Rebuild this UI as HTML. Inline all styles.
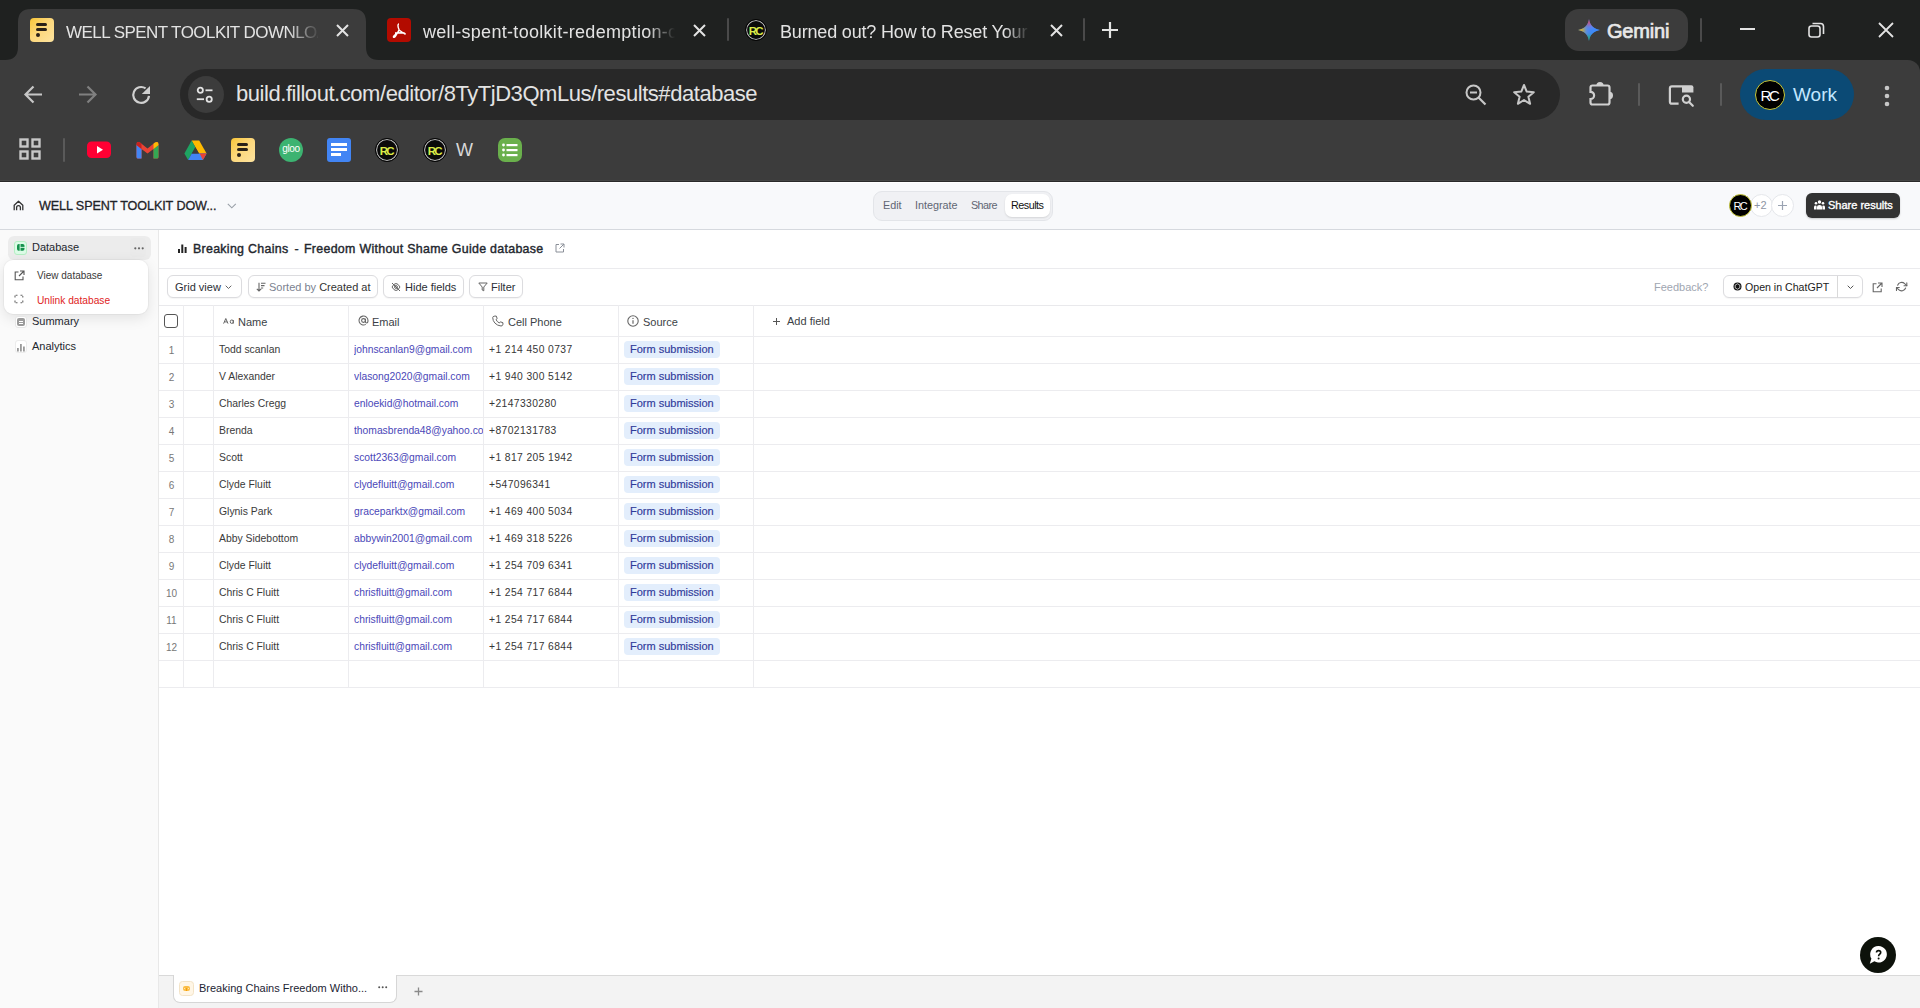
<!DOCTYPE html>
<html><head><meta charset="utf-8">
<style>
*{box-sizing:border-box;margin:0;padding:0}
html,body{width:1920px;height:1008px;overflow:hidden;background:#fff;font-family:"Liberation Sans",sans-serif}
.a{position:absolute}
.t{position:absolute;white-space:nowrap;line-height:1}
svg{position:absolute;overflow:visible}
/* chrome */
#strip{left:0;top:0;width:1920px;height:80px;background:#1f2120}
#toolbar{left:0;top:60px;width:1920px;height:122px;background:#3c3c3c;border-top-right-radius:12px}
.ctext{color:#e3e3e3;font-size:18px}
/* app */
.rc{position:absolute;border-radius:50%;background:#0a0a0a;border:1.2px solid #050505;box-shadow:inset 0 0 0 1.1px #b8b8b8;display:flex;align-items:center;justify-content:center;overflow:hidden}
.rc::after{content:"RC";color:#dcec48;font-size:11.5px;font-weight:700;letter-spacing:-1.8px;margin-left:-1.5px;margin-top:1px}
.rc span{display:none}
#app{left:0;top:182px;width:1920px;height:826px;background:#fff}

.seg{top:200px;font-size:10.8px;color:#5f6673}
.sb{font-size:11px;color:#23272e}
.btn{top:275px;height:23px;border-radius:6px;border:1px solid #dcdcdf;background:#fff;box-shadow:0 1px 1px rgba(0,0,0,.04)}
.tb{top:282px;font-size:11px;color:#2b2f36}
.th{top:317px;font-size:11px;color:#3b3f46}
.hl{left:159px;width:1761px;height:1px;background:#ececef}
.vl{width:1px;background:#ececef}
.rn{left:159px;width:25px;text-align:center;font-size:10px;color:#777}
.nm{left:219px;margin-top:0.2px;font-size:10.4px;color:#3a3a3a}
.em{left:354px;margin-top:0.2px;font-size:10.3px;color:#4a47b8;width:129px;overflow:hidden}
.ph{left:489px;margin-top:0.2px;font-size:10.3px;color:#363636;letter-spacing:0.4px}
.pill{left:624px;width:96px;height:17px;border-radius:4px;background:#e3eefc}
.pt{left:630px;font-size:11px;color:#2f3a9a;-webkit-text-stroke:0.15px #2f3a9a}
</style></head><body>
<!-- ============ BROWSER CHROME ============ -->
<div id="strip" class="a"></div>
<div id="toolbar" class="a"></div>

<!-- active tab shape -->
<svg class="a" style="left:0;top:0" width="400" height="60"><path d="M5 60 Q18 60 18 47 L18 22 Q18 9 31 9 L353 9 Q366 9 366 22 L366 47 Q366 60 379 60 Z" fill="#3c3c3c"/></svg>
<!-- tab1 favicon fillout -->
<div class="a" style="left:30px;top:18px;width:24px;height:24px;border-radius:4px;background:linear-gradient(135deg,#f8c537 0%,#fcd77a 45%,#fde3a0 100%)"></div>
<div class="a" style="left:36px;top:23px;width:11px;height:3px;border-radius:2px;background:#2a2118"></div>
<div class="a" style="left:36px;top:28px;width:11px;height:3px;border-radius:2px;background:#2a2118"></div>
<div class="a" style="left:36px;top:33px;width:4px;height:4px;border-radius:2px;background:#2a2118"></div>
<div class="t ctext" style="left:66px;top:23.5px;font-size:17px;letter-spacing:-0.55px;width:252px;overflow:hidden;-webkit-mask-image:linear-gradient(90deg,#000 222px,transparent 254px)">WELL SPENT TOOLKIT DOWNLOAD</div>
<svg style="left:336px;top:24px" width="13" height="13"><path d="M1 1L12 12M12 1L1 12" stroke="#e3e3e3" stroke-width="2"/></svg>
<!-- tab2 pdf -->
<div class="a" style="left:387px;top:18px;width:24px;height:24px;border-radius:4px;background:#b30b00"></div>
<svg style="left:387px;top:18px" width="24" height="24"><path d="M12 6 C10.5 6 10.8 9 12 11.5 C13 14 7 17 6.5 18.5 C6 20 8 19.5 9 17.5 L12 12 L17 15.5 C19 17 18.5 15 16 14.8 L8 15" fill="none" stroke="#fff" stroke-width="1.4"/></svg>
<div class="t ctext" style="left:423px;top:23px;font-size:18px;letter-spacing:0.3px;width:255px;overflow:hidden;-webkit-mask-image:linear-gradient(90deg,#000 225px,transparent 252px)">well-spent-toolkit-redemption-code</div>
<svg style="left:693px;top:24px" width="13" height="13"><path d="M1 1L12 12M12 1L1 12" stroke="#e3e3e3" stroke-width="2"/></svg>
<div class="a" style="left:727px;top:18px;width:2px;height:23px;background:#4a4a4a;border-radius:1px"></div>
<!-- tab3 RC -->
<div class="a rc" style="left:745px;top:19px;width:22px;height:22px"></div>
<div class="t ctext" style="left:780px;top:23px;font-size:18px;letter-spacing:-0.17px;width:250px;overflow:hidden;-webkit-mask-image:linear-gradient(90deg,#000 225px,transparent 250px)">Burned out? How to Reset Your Life</div>
<svg style="left:1050px;top:24px" width="13" height="13"><path d="M1 1L12 12M12 1L1 12" stroke="#e3e3e3" stroke-width="2"/></svg>
<div class="a" style="left:1083px;top:18px;width:2px;height:23px;background:#4a4a4a;border-radius:1px"></div>
<svg style="left:1102px;top:22px" width="16" height="16"><path d="M8 0V16M0 8H16" stroke="#e3e3e3" stroke-width="2.2"/></svg>
<!-- gemini -->
<div class="a" style="left:1565px;top:9px;width:123px;height:42px;border-radius:14px;background:#3c3c3c"></div>
<svg style="left:1577px;top:18px" width="24" height="24"><defs><clipPath id="gstar"><path d="M12 1 C12.8 7 17 11.2 23 12 C17 12.8 12.8 17 12 23 C11.2 17 7 12.8 1 12 C7 11.2 11.2 7 12 1Z"/></clipPath><filter id="gblur"><feGaussianBlur stdDeviation="2.5"/></filter></defs><g clip-path="url(#gstar)"><rect width="24" height="24" fill="#4285f4"/><g filter="url(#gblur)"><circle cx="12" cy="3" r="4" fill="#f2434f"/><circle cx="3" cy="12" r="4.5" fill="#fbbc04"/><circle cx="12" cy="21.5" r="4" fill="#16b05a"/><circle cx="19" cy="12" r="5" fill="#3d8bfd"/></g></g></svg>
<div class="t" style="left:1607px;top:21px;font-size:20px;font-weight:400;color:#e8e8e8;letter-spacing:-0.2px;-webkit-text-stroke:0.7px #e8e8e8">Gemini</div>
<div class="a" style="left:1700px;top:18px;width:2px;height:24px;background:#4a4a4a;border-radius:1px"></div>
<!-- window controls -->
<div class="a" style="left:1740px;top:28px;width:15px;height:2px;background:#e3e3e3"></div>
<svg style="left:1808px;top:22px" width="17" height="16"><rect x="1" y="4" width="11" height="11" rx="2.5" fill="none" stroke="#e3e3e3" stroke-width="1.6"/><path d="M4.5 1.5H12.5Q15.5 1.5 15.5 4.5V12" fill="none" stroke="#e3e3e3" stroke-width="1.6"/></svg>
<svg style="left:1878px;top:22px" width="16" height="16"><path d="M1 1L15 15M15 1L1 15" stroke="#e3e3e3" stroke-width="1.8"/></svg>

<!-- toolbar -->
<svg style="left:24px;top:85px" width="19" height="19"><path d="M18 9.5H2M9.5 1.5L1.5 9.5L9.5 17.5" fill="none" stroke="#c7c7c7" stroke-width="2.2"/></svg>
<svg style="left:78px;top:85px" width="19" height="19"><path d="M1 9.5H17M9.5 1.5L17.5 9.5L9.5 17.5" fill="none" stroke="#808080" stroke-width="2.2"/></svg>
<svg style="left:131px;top:84px" width="21" height="21"><path d="M18 11.8 A7.9 7.9 0 1 1 14.6 4.4" fill="none" stroke="#d0d0d0" stroke-width="2.2"/><path d="M19 1.9V10.1H10.8Z" fill="#d0d0d0"/></svg>
<div class="a" style="left:180px;top:69px;width:1380px;height:51px;border-radius:26px;background:#282828"></div>
<div class="a" style="left:188px;top:76px;width:36px;height:37px;border-radius:50%;background:#3c3c3c"></div>
<svg style="left:195px;top:85px" width="22" height="20"><circle cx="5.3" cy="5.3" r="2.6" fill="none" stroke="#e3e3e3" stroke-width="1.8"/><path d="M10.5 5.3H17.5" stroke="#e3e3e3" stroke-width="1.8"/><circle cx="14.2" cy="14.2" r="2.6" fill="none" stroke="#e3e3e3" stroke-width="1.8"/><path d="M1.8 14.2H9" stroke="#e3e3e3" stroke-width="1.8"/></svg>
<div class="t" style="left:236px;top:82.5px;font-size:22px;letter-spacing:-0.45px;color:#e3e3e3">build.fillout.com/editor/8TyTjD3QmLus/results#database</div>
<svg style="left:1465px;top:84px" width="23" height="23"><circle cx="8.5" cy="8.5" r="7" fill="none" stroke="#c7c7c7" stroke-width="2"/><path d="M5 8.5H12" stroke="#c7c7c7" stroke-width="2"/><path d="M13.5 13.5L20.5 20.5" stroke="#c7c7c7" stroke-width="2.2"/></svg>
<svg style="left:1512px;top:83px" width="24" height="23"><path d="M12 2L14.7 8.6L21.8 9.2L16.4 13.8L18.1 20.8L12 17L5.9 20.8L7.6 13.8L2.2 9.2L9.3 8.6Z" fill="none" stroke="#c7c7c7" stroke-width="2" stroke-linejoin="round"/></svg>
<svg style="left:1588px;top:81px" width="27" height="26"><path d="M4.5 4.5H19.5Q21.5 4.5 21.5 6.5V21.5Q21.5 23.5 19.5 23.5H4.5Q2.5 23.5 2.5 21.5V18A3.6 3.6 0 0 0 2.5 10.8V6.5Q2.5 4.5 4.5 4.5Z" fill="none" stroke="#d0d0d0" stroke-width="2.2"/><path d="M8.4 4.6A3.6 3.6 0 0 1 15.6 4.6Z" fill="#d0d0d0"/><path d="M21.4 10.8A3.6 3.6 0 0 1 21.4 18Z" fill="#d0d0d0"/></svg>
<div class="a" style="left:1638px;top:83px;width:2px;height:23px;background:#5a5a5a;border-radius:1px"></div>
<svg style="left:1668px;top:83px" width="28" height="25"><path d="M10.6 20.7H3.9Q1.9 20.7 1.9 18.7V5.3Q1.9 3.3 3.9 3.3H14" fill="none" stroke="#d0d0d0" stroke-width="2.2"/><path d="M14 2.2H23.4Q25.4 2.2 25.4 4.2V9.6H14Z" fill="#d0d0d0"/><circle cx="18.4" cy="16.3" r="3.6" fill="none" stroke="#d0d0d0" stroke-width="2.2"/><path d="M21 19L24.8 22.8" stroke="#d0d0d0" stroke-width="2.2" stroke-linecap="round"/></svg>
<div class="a" style="left:1720px;top:83px;width:2px;height:23px;background:#5a5a5a;border-radius:1px"></div>
<div class="a" style="left:1740px;top:69px;width:114px;height:51px;border-radius:26px;background:#0b4a75"></div>
<div class="a" style="left:1755px;top:80px;width:30px;height:30px;border-radius:50%;background:#000;border:1.5px solid #c9c93a;display:flex;align-items:center;justify-content:center"><span style="color:#fff;font-size:15px;font-weight:400;letter-spacing:-2.4px;margin-left:-2px">RC</span></div>
<div class="t" style="left:1793px;top:85px;font-size:19px;color:#c2e7ff">Work</div>
<svg style="left:1883px;top:85px" width="8" height="22"><circle cx="4" cy="3" r="2.3" fill="#c7c7c7"/><circle cx="4" cy="11" r="2.3" fill="#c7c7c7"/><circle cx="4" cy="19" r="2.3" fill="#c7c7c7"/></svg>

<!-- bookmarks -->
<svg style="left:19px;top:138px" width="23" height="23"><g fill="none" stroke="#c7c7c7" stroke-width="2.4"><rect x="1.5" y="1.5" width="7" height="7"/><rect x="13.5" y="1.5" width="7" height="7"/><rect x="1.5" y="13.5" width="7" height="7"/><rect x="13.5" y="13.5" width="7" height="7"/></g></svg>
<div class="a" style="left:63px;top:138px;width:2px;height:24px;background:#5a5a5a;border-radius:1px"></div>
<svg style="left:87px;top:141px" width="25" height="18"><rect x="0" y="0.5" width="24" height="16.5" rx="4.5" fill="#ff0033"/><path d="M10 5L16 8.7L10 12.4Z" fill="#fff"/></svg>
<svg style="left:136px;top:141px" width="23" height="18"><path d="M1 17V4L11.5 11.5L22 4V17" fill="none" stroke="#ea4335" stroke-width="0"/><path d="M0.5 3.5 Q0.5 0 4 1.5 L11.5 7.5 L19 1.5 Q22.5 0 22.5 3.5 L22.5 16 Q22.5 17.5 21 17.5 L17.5 17.5 L17.5 8 L11.5 12.5 L5.5 8 L5.5 17.5 L2 17.5 Q0.5 17.5 0.5 16Z" fill="#ea4335"/><path d="M0.5 4 L0.5 16 Q0.5 17.5 2 17.5 L5.5 17.5 L5.5 8 Z" fill="#4285f4"/><path d="M17.5 8 L17.5 17.5 L21 17.5 Q22.5 17.5 22.5 16 L22.5 4Z" fill="#34a853"/><path d="M19 1.5 Q22.5 0 22.5 3.5 L22.5 4 L17.5 8 L17.5 2.7Z" fill="#fbbc04"/><path d="M0.5 3.5 Q0.5 0 4 1.5 L5.5 2.7 L5.5 8 L0.5 4Z" fill="#c5221f"/></svg>
<svg style="left:184px;top:140px" width="23" height="21"><path d="M7.6 0.6H15.2L22.6 13.4H15Z" fill="#ffba00"/><path d="M7.6 0.6L11.4 7.2L4.1 19.9L0.4 13.4Z" fill="#1ea362"/><path d="M7.8 13.4H22.6L18.9 19.9H4.1Z" fill="#4285f4"/><path d="M22.6 13.4L18.9 19.9L15.6 13.4Z" fill="#ea4335"/><path d="M11.4 7.2L15 13.4H7.8Z" fill="#3c3c3c"/></svg>
<div class="a" style="left:231px;top:138px;width:24px;height:24px;border-radius:4px;background:linear-gradient(135deg,#f8c537 0%,#fcd77a 45%,#fde3a0 100%)"></div>
<div class="a" style="left:237px;top:143px;width:11px;height:3px;border-radius:2px;background:#2a2118"></div>
<div class="a" style="left:237px;top:148px;width:11px;height:3px;border-radius:2px;background:#2a2118"></div>
<div class="a" style="left:237px;top:153px;width:4px;height:4px;border-radius:2px;background:#2a2118"></div>
<div class="a" style="left:279px;top:138px;width:24px;height:24px;border-radius:50%;background:#3cb371"></div>
<div class="t" style="left:280px;top:144px;width:22px;text-align:center;font-size:10px;color:#fff;letter-spacing:-0.3px">gloo</div>
<div class="a" style="left:327px;top:138px;width:24px;height:24px;border-radius:3px;background:#4285f4"></div>
<div class="a" style="left:331px;top:143px;width:16px;height:3px;background:#fff"></div>
<div class="a" style="left:331px;top:148px;width:16px;height:3px;background:#fff"></div>
<div class="a" style="left:331px;top:153px;width:10px;height:3px;background:#fff"></div>
<div class="a rc" style="left:375px;top:138px;width:24px;height:24px"></div>
<div class="a rc" style="left:423px;top:138px;width:24px;height:24px"></div>
<div class="t" style="left:456px;top:141px;font-size:18px;color:#d8d8d8">W</div>
<div class="a" style="left:498px;top:138px;width:24px;height:24px;border-radius:7px;background:#6ab04c"></div>
<svg style="left:502px;top:143px" width="16" height="14"><g fill="#fff"><circle cx="1.5" cy="2" r="1.4"/><circle cx="1.5" cy="7" r="1.4"/><circle cx="1.5" cy="12" r="1.4"/><rect x="4.5" y="1" width="11" height="2.2"/><rect x="4.5" y="6" width="11" height="2.2"/><rect x="4.5" y="11" width="11" height="2.2"/></g></svg>
<div class="a" style="left:0;top:180px;width:1920px;height:1px;background:#454545"></div>
<div class="a" style="left:0;top:181px;width:1920px;height:1px;background:#2a2a2a"></div>

<!-- ============ APP ============ -->
<div id="app" class="a"></div>

<!-- header -->
<div class="a" style="left:0;top:182px;width:1920px;height:1px;background:#fff"></div>
<div class="a" style="left:0;top:183px;width:1920px;height:46px;background:#f8f9fb"></div>
<div class="a" style="left:0;top:229px;width:1920px;height:1px;background:#d6d9de"></div>
<svg style="left:13px;top:200px" width="11" height="11"><path d="M1.2 10.2V5.2L5.5 1.3L9.8 5.2V10.2M3.6 10.2V7.6A1.9 1.9 0 0 1 7.4 7.6V10.2" fill="none" stroke="#333" stroke-width="1.3" stroke-linejoin="round"/></svg>
<div class="t" style="left:39px;top:200px;font-size:12.6px;font-weight:400;color:#1f2328;letter-spacing:-0.1px;-webkit-text-stroke:0.3px #1f2328">WELL SPENT TOOLKIT DOW...</div>
<svg style="left:227px;top:203px" width="10" height="6"><path d="M0.8 0.8L4.8 4.8L8.8 0.8" fill="none" stroke="#9aa0a8" stroke-width="1.1"/></svg>
<!-- segmented -->
<div class="a" style="left:873px;top:191px;width:180px;height:30px;border-radius:9px;background:#f0f1f4;border:1px solid #e3e5e9"></div>
<div class="a" style="left:1005px;top:194px;width:45px;height:23px;border-radius:7px;background:#fff;box-shadow:0 1px 2px rgba(0,0,0,.12)"></div>
<div class="t seg" style="left:883px">Edit</div>
<div class="t seg" style="left:915px">Integrate</div>
<div class="t seg" style="left:971px;letter-spacing:-0.6px">Share</div>
<div class="t seg" style="left:1011px;color:#111;letter-spacing:-0.5px">Results</div>
<!-- avatars -->
<div class="a" style="left:1750px;top:194px;width:23px;height:23px;border-radius:50%;background:#fff;border:1px solid #e5e7eb"></div>
<div class="t" style="left:1754px;top:200px;font-size:11px;color:#8d95a3">+2</div>
<div class="a" style="left:1771px;top:194px;width:23px;height:23px;border-radius:50%;background:#fff;border:1px solid #e5e7eb"></div>
<svg style="left:1777px;top:200px" width="11" height="11"><path d="M5.5 1V10M1 5.5H10" stroke="#9aa3b2" stroke-width="1.2"/></svg>
<div class="a" style="left:1729px;top:194px;width:23px;height:23px;border-radius:50%;background:#000;border:1.5px solid #c9c93a;display:flex;align-items:center;justify-content:center"><span style="color:#fff;font-size:11px;font-weight:400;letter-spacing:-1.8px;margin-left:-1.5px">RC</span></div>
<!-- share results -->
<div class="a" style="left:1806px;top:193px;width:94px;height:25px;border-radius:6px;background:#333;box-shadow:0 1px 2px rgba(0,0,0,.2)"></div>
<svg style="left:1814px;top:200px" width="11" height="10"><g fill="#fff"><circle cx="5.5" cy="2" r="1.7"/><circle cx="2" cy="3.2" r="1.3"/><circle cx="9" cy="3.2" r="1.3"/><path d="M3 9.5V6.8Q3 5 5.5 5Q8 5 8 6.8V9.5Z"/><path d="M0 9.5V7Q0 5.6 1.8 5.6Q2.6 5.6 2.6 6.5V9.5Z"/><path d="M11 9.5V7Q11 5.6 9.2 5.6Q8.4 5.6 8.4 6.5V9.5Z"/></g></svg>
<div class="t" style="left:1828px;top:200px;font-size:11px;font-weight:400;color:#fff;-webkit-text-stroke:0.35px #fff">Share results</div>

<!-- sidebar -->
<div class="a" style="left:0;top:230px;width:158px;height:778px;background:#fafafa"></div>
<div class="a" style="left:158px;top:230px;width:1px;height:778px;background:#e8e8e8"></div>
<div class="a" style="left:8px;top:236px;width:143px;height:23.5px;border-radius:6px;background:#ececec"></div>
<div class="a" style="left:130px;top:238px;width:16px;height:19px;border-radius:4px;background:#eaeaea"></div>
<svg style="left:134px;top:247px" width="10" height="3"><g fill="#666"><circle cx="1.3" cy="1.3" r="1.1"/><circle cx="5" cy="1.3" r="1.1"/><circle cx="8.7" cy="1.3" r="1.1"/></g></svg>
<div class="a" style="left:14px;top:241px;width:13px;height:13.5px;border-radius:3px;background:#dcfce7;border:1px solid #b5efc4"></div>
<svg style="left:16.5px;top:244px" width="8" height="7"><rect x="0" y="0" width="7.5" height="6.8" rx="1.8" fill="#15924d"/><path d="M3.1 0V7M3.1 3.4H8" stroke="#dcfce7" stroke-width="0.9"/></svg>
<div class="t sb" style="left:32px;top:242.3px">Database</div>
<!-- popup -->
<div class="a" style="left:4px;top:260px;width:144px;height:54px;border-radius:9px;background:#fff;box-shadow:0 4px 14px rgba(0,0,0,.10),0 0 0 1px rgba(0,0,0,.03)"></div>
<svg style="left:14px;top:270px" width="11" height="11"><path d="M4.5 2H1.2V9.8H9V6.5M6 1H10V5M10 1L5 6" fill="none" stroke="#555" stroke-width="1.1"/></svg>
<div class="t" style="left:37px;top:271px;font-size:10px;color:#3a3a3a">View database</div>
<svg style="left:13px;top:293px" width="12" height="12"><path d="M2 4.5V2.2H4.5M2 7.5V9.8H4.5M7.5 2.2H9.8V4.5M9.8 7.5V9.8H7.5" fill="none" stroke="#666" stroke-width="1.1" stroke-dasharray="2 1"/></svg>
<div class="t" style="left:37px;top:295.5px;font-size:10.2px;color:#e02424">Unlink database</div>
<div class="a" style="left:15px;top:316px;width:12px;height:12px;border-radius:3px;background:#fff;border:1px solid #e6e6e6"></div>
<div class="a" style="left:17px;top:318px;width:8px;height:8px;border-radius:2px;background:#9a9a9a"></div><div class="a" style="left:19px;top:320.5px;width:4px;height:1px;background:#fff"></div><div class="a" style="left:19px;top:322.5px;width:4px;height:1px;background:#fff"></div>
<div class="t sb" style="left:32px;top:316px">Summary</div>
<div class="a" style="left:15px;top:340px;width:12px;height:13px;border-radius:3px;background:#fff;border:1px solid #ececec"></div>
<svg style="left:16px;top:343px" width="10" height="9"><g fill="#9a9a9a"><rect x="1" y="5" width="1.8" height="3.5"/><rect x="4" y="1" width="1.8" height="7.5"/><rect x="7" y="3.5" width="1.8" height="5"/></g></svg>
<div class="t sb" style="left:32px;top:341px">Analytics</div>

<!-- main title row -->
<svg style="left:178px;top:244px" width="9" height="9"><g fill="#222"><rect x="0" y="5" width="2" height="4"/><rect x="3.3" y="0.5" width="2" height="8.5"/><rect x="6.6" y="3" width="2" height="6"/></g></svg>
<div class="t" style="left:193px;top:243px;font-size:12.4px;color:#23272e;letter-spacing:0.3px;-webkit-text-stroke:0.4px #23272e">Breaking Chains</div><div class="t" style="left:294.5px;top:243px;font-size:12.4px;color:#23272e;letter-spacing:0.3px;-webkit-text-stroke:0.4px #23272e">-</div><div class="t" style="left:304px;top:243px;font-size:12.4px;color:#23272e;letter-spacing:0.3px;-webkit-text-stroke:0.4px #23272e">Freedom Without Shame Guide database</div>
<svg style="left:555px;top:243px" width="10" height="10"><path d="M4 1.5H1V9H8.5V6M5.5 1H9V4.5M9 1L4.5 5.5" fill="none" stroke="#8a8f98" stroke-width="1"/></svg>
<div class="a" style="left:159px;top:268px;width:1761px;height:1px;background:#ebebee"></div>

<!-- toolbar buttons -->
<div class="a btn" style="left:167px;width:75px"></div>
<div class="t tb" style="left:175px">Grid view</div>
<svg style="left:225px;top:285px" width="7" height="5"><path d="M0.7 0.7L3.5 3.5L6.3 0.7" fill="none" stroke="#666" stroke-width="1"/></svg>
<div class="a btn" style="left:248px;width:130px"></div>
<svg style="left:256px;top:282px" width="10" height="10"><path d="M3 0.8V9M0.8 6.8L3 9L5.2 6.8M5 1.2H9.5M5 3.6H8.5M5 6H7.2" fill="none" stroke="#666" stroke-width="1.1"/></svg>
<div class="t tb" style="left:269px;color:#7b8290">Sorted by <span style="color:#333">Created at</span></div>
<div class="a btn" style="left:383px;width:81px"></div>
<svg style="left:391px;top:282px" width="10" height="10"><path d="M1 5Q3 1.5 5 1.5Q7 1.5 9 5Q7 8.5 5 8.5Q3 8.5 1 5ZM1 1L9 9" fill="none" stroke="#666" stroke-width="1"/><circle cx="5" cy="5" r="1.4" fill="none" stroke="#666" stroke-width="1"/></svg>
<div class="t tb" style="left:405px">Hide fields</div>
<div class="a btn" style="left:469px;width:54px"></div>
<svg style="left:478px;top:282px" width="10" height="10"><path d="M0.8 1H9.2L5.8 5V8.8L4.2 8V5Z" fill="none" stroke="#666" stroke-width="1" stroke-linejoin="round"/></svg>
<div class="t tb" style="left:491px">Filter</div>

<div class="t" style="left:1654px;top:282px;font-size:11px;color:#a0a6b1">Feedback?</div>
<div class="a btn" style="left:1723px;width:140px"></div>
<div class="a" style="left:1837px;top:276px;width:1px;height:22px;background:#d9d9d9"></div>
<svg style="left:1733px;top:282px" width="9" height="9"><circle cx="4.5" cy="4.5" r="4" fill="#111"/><path d="M4.5 1.8L6.8 3.1V5.9L4.5 7.2L2.2 5.9V3.1Z" fill="none" stroke="#fff" stroke-width=".7"/></svg>
<div class="t tb" style="left:1745px;font-size:10.6px;color:#222">Open in ChatGPT</div>
<svg style="left:1847px;top:285px" width="7" height="5"><path d="M0.7 0.7L3.5 3.5L6.3 0.7" fill="none" stroke="#555" stroke-width="1"/></svg>
<svg style="left:1872px;top:282px" width="11" height="11"><path d="M4.5 1.8H1.2V9.8H9.2V6.5M6 1H10V5M10 1L5 6" fill="none" stroke="#666" stroke-width="1.1"/></svg>
<svg style="left:1896px;top:280.5px" width="12" height="12"><g transform="scale(0.47)" fill="none" stroke="#666" stroke-width="2.3" stroke-linecap="round" stroke-linejoin="round"><polyline points="23 4 23 10 17 10"/><polyline points="1 20 1 14 7 14"/><path d="M3.51 9a9 9 0 0 1 14.85-3.36L23 10M1 14l4.64 4.36A9 9 0 0 0 20.49 15"/></g></svg>

<!-- table -->
<div class="a" style="left:159px;top:305px;width:1761px;height:1px;background:#e9e9ec"></div>
<div class="a hl" style="top:336px"></div>
<div class="a hl" style="top:363px"></div>
<div class="a hl" style="top:390px"></div>
<div class="a hl" style="top:417px"></div>
<div class="a hl" style="top:444px"></div>
<div class="a hl" style="top:471px"></div>
<div class="a hl" style="top:498px"></div>
<div class="a hl" style="top:525px"></div>
<div class="a hl" style="top:552px"></div>
<div class="a hl" style="top:579px"></div>
<div class="a hl" style="top:606px"></div>
<div class="a hl" style="top:633px"></div>
<div class="a hl" style="top:660px"></div>
<div class="a hl" style="top:687px"></div>
<div class="a vl" style="left:183px;top:305px;height:383px"></div>
<div class="a vl" style="left:213px;top:305px;height:383px"></div>
<div class="a vl" style="left:348px;top:305px;height:383px"></div>
<div class="a vl" style="left:483px;top:305px;height:383px"></div>
<div class="a vl" style="left:618px;top:305px;height:383px"></div>
<div class="a vl" style="left:753px;top:305px;height:383px"></div>
<div class="a" style="left:164px;top:314px;width:14px;height:14px;border-radius:3px;border:1.2px solid #555;background:#fff"></div>
<svg style="left:223px;top:318px" width="11" height="6"><path d="M0.6 5.6L2.8 0.5L5 5.6M1.4 3.9H4.2" fill="none" stroke="#666" stroke-width="1"/><rect x="7.3" y="2" width="3" height="3.4" rx="1.4" fill="none" stroke="#666" stroke-width="1"/><path d="M10.3 2V5.6" stroke="#666" stroke-width="1"/></svg>
<div class="t th" style="left:238px">Name</div>
<svg style="left:358px;top:315px" width="11" height="11"><circle cx="5.5" cy="5.5" r="1.9" fill="none" stroke="#666" stroke-width="1.1"/><path d="M7.4 3.8V6.6Q7.4 8 8.6 8Q10 8 10 5.5A4.5 4.5 0 1 0 7.8 9.4" fill="none" stroke="#666" stroke-width="1.1"/></svg>
<div class="t th" style="left:372px">Email</div>
<svg style="left:492px;top:315px" width="12" height="12"><path d="M2.2 1.2L4.2 1L5.2 3.6L4 4.6Q5 6.8 7.4 8L8.4 6.8L11 7.8L10.8 9.8Q10.5 11 9 11Q5.4 10.6 3 8.2Q0.8 5.8 0.7 2.6Q0.8 1.4 2.2 1.2Z" fill="none" stroke="#666" stroke-width="1"/></svg>
<div class="t th" style="left:508px">Cell Phone</div>
<svg style="left:627px;top:315px" width="12" height="12"><circle cx="6" cy="6" r="5.2" fill="none" stroke="#666" stroke-width="1.1"/><path d="M6 5.2V8.8" stroke="#666" stroke-width="1.2"/><circle cx="6" cy="3.4" r=".7" fill="#666"/></svg>
<div class="t th" style="left:643px">Source</div>
<svg style="left:772px;top:317px" width="8" height="8"><path d="M4.5 1V8M1 4.5H8" stroke="#555" stroke-width="1"/></svg>
<div class="t th" style="left:787px;top:316px">Add field</div>
<div class="t rn" style="top:346px">1</div><div class="t nm" style="top:345px">Todd scanlan</div><div class="t em" style="top:345px">johnscanlan9@gmail.com</div><div class="t ph" style="top:345px">+1 214 450 0737</div><div class="a pill" style="top:341px"></div><div class="t pt" style="top:344px">Form submission</div>
<div class="t rn" style="top:373px">2</div><div class="t nm" style="top:372px">V Alexander</div><div class="t em" style="top:372px">vlasong2020@gmail.com</div><div class="t ph" style="top:372px">+1 940 300 5142</div><div class="a pill" style="top:368px"></div><div class="t pt" style="top:371px">Form submission</div>
<div class="t rn" style="top:400px">3</div><div class="t nm" style="top:399px">Charles Cregg</div><div class="t em" style="top:399px">enloekid@hotmail.com</div><div class="t ph" style="top:399px">+2147330280</div><div class="a pill" style="top:395px"></div><div class="t pt" style="top:398px">Form submission</div>
<div class="t rn" style="top:427px">4</div><div class="t nm" style="top:426px">Brenda</div><div class="t em" style="top:426px">thomasbrenda48@yahoo.com</div><div class="t ph" style="top:426px">+8702131783</div><div class="a pill" style="top:422px"></div><div class="t pt" style="top:425px">Form submission</div>
<div class="t rn" style="top:454px">5</div><div class="t nm" style="top:453px">Scott</div><div class="t em" style="top:453px">scott2363@gmail.com</div><div class="t ph" style="top:453px">+1 817 205 1942</div><div class="a pill" style="top:449px"></div><div class="t pt" style="top:452px">Form submission</div>
<div class="t rn" style="top:481px">6</div><div class="t nm" style="top:480px">Clyde Fluitt</div><div class="t em" style="top:480px">clydefluitt@gmail.com</div><div class="t ph" style="top:480px">+547096341</div><div class="a pill" style="top:476px"></div><div class="t pt" style="top:479px">Form submission</div>
<div class="t rn" style="top:508px">7</div><div class="t nm" style="top:507px">Glynis Park</div><div class="t em" style="top:507px">graceparktx@gmail.com</div><div class="t ph" style="top:507px">+1 469 400 5034</div><div class="a pill" style="top:503px"></div><div class="t pt" style="top:506px">Form submission</div>
<div class="t rn" style="top:535px">8</div><div class="t nm" style="top:534px">Abby Sidebottom</div><div class="t em" style="top:534px">abbywin2001@gmail.com</div><div class="t ph" style="top:534px">+1 469 318 5226</div><div class="a pill" style="top:530px"></div><div class="t pt" style="top:533px">Form submission</div>
<div class="t rn" style="top:562px">9</div><div class="t nm" style="top:561px">Clyde Fluitt</div><div class="t em" style="top:561px">clydefluitt@gmail.com</div><div class="t ph" style="top:561px">+1 254 709 6341</div><div class="a pill" style="top:557px"></div><div class="t pt" style="top:560px">Form submission</div>
<div class="t rn" style="top:589px">10</div><div class="t nm" style="top:588px">Chris C Fluitt</div><div class="t em" style="top:588px">chrisfluitt@gmail.com</div><div class="t ph" style="top:588px">+1 254 717 6844</div><div class="a pill" style="top:584px"></div><div class="t pt" style="top:587px">Form submission</div>
<div class="t rn" style="top:616px">11</div><div class="t nm" style="top:615px">Chris C Fluitt</div><div class="t em" style="top:615px">chrisfluitt@gmail.com</div><div class="t ph" style="top:615px">+1 254 717 6844</div><div class="a pill" style="top:611px"></div><div class="t pt" style="top:614px">Form submission</div>
<div class="t rn" style="top:643px">12</div><div class="t nm" style="top:642px">Chris C Fluitt</div><div class="t em" style="top:642px">chrisfluitt@gmail.com</div><div class="t ph" style="top:642px">+1 254 717 6844</div><div class="a pill" style="top:638px"></div><div class="t pt" style="top:641px">Form submission</div>

<!-- bottom bar -->
<div class="a" style="left:159px;top:975px;width:1761px;height:33px;background:#f3f3f3"></div>
<div class="a" style="left:159px;top:975px;width:1761px;height:1px;background:#d9d9d9"></div>
<div class="a" style="left:173px;top:975px;width:224px;height:28px;background:#fff;border:1px solid #d6d6d6;border-top:none;border-radius:0 0 7px 7px"></div>
<div class="a" style="left:174px;top:975px;width:222px;height:1px;background:#fff"></div>
<div class="a" style="left:179px;top:981px;width:15px;height:15px;border-radius:3.5px;background:#fff6e6;border:1px solid #f3e3c6"></div>
<div class="a" style="left:182.8px;top:986px;width:7.4px;height:5.2px;border-radius:2px;background:#fbbd45"></div>
<div class="a" style="left:186.2px;top:987.8px;width:0.8px;height:3.4px;background:#f59e0b"></div><div class="a" style="left:184px;top:988px;width:1.2px;height:1.2px;background:#fff3d6;border-radius:50%"></div><div class="a" style="left:188px;top:988px;width:1.2px;height:1.2px;background:#fff3d6;border-radius:50%"></div>
<div class="t" style="left:199px;top:983px;font-size:11px;color:#1c2433">Breaking Chains Freedom Witho...</div>
<svg style="left:378px;top:986px" width="10" height="3"><g fill="#555"><circle cx="1.2" cy="1.2" r="1"/><circle cx="4.7" cy="1.2" r="1"/><circle cx="8.2" cy="1.2" r="1"/></g></svg>
<svg style="left:414px;top:987px" width="9" height="9"><path d="M4.5 0.5V8.5M0.5 4.5H8.5" stroke="#8a8a8a" stroke-width="1.3"/></svg>
<!-- help -->
<div class="a" style="left:1860px;top:937px;width:36px;height:36px;border-radius:50%;background:#0d120b"></div>
<svg style="left:1868px;top:945px" width="20" height="20"><path d="M10.6 1.1A8.2 8.2 0 1 1 6.4 16.3L1.8 18.8L3.4 13.6A8.2 8.2 0 0 1 10.6 1.1Z" fill="#fff"/><path d="M8.5 7.6Q8.5 5.6 10.6 5.6Q12.7 5.6 12.7 7.5Q12.7 8.6 11.5 9.3Q10.6 9.9 10.6 11.2" fill="none" stroke="#0d120b" stroke-width="1.6"/><circle cx="10.6" cy="13.6" r="1" fill="#0d120b"/></svg>

</body></html>
